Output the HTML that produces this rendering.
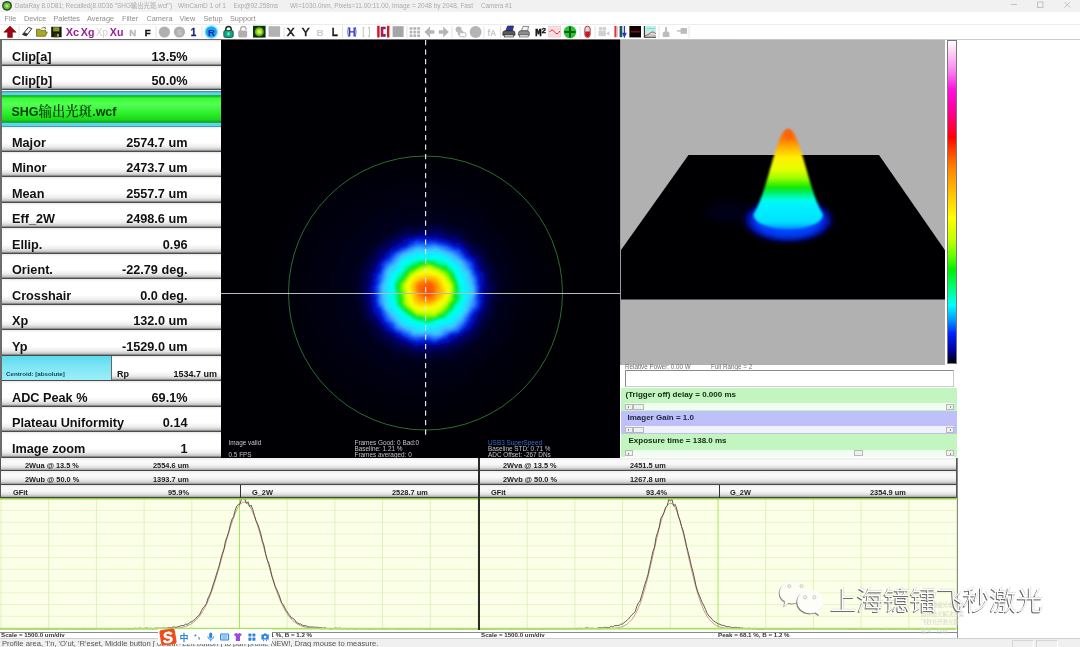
<!DOCTYPE html>
<html lang="zh">
<head>
<meta charset="utf-8">
<title>DataRay</title>
<style>
*{box-sizing:border-box;margin:0;padding:0}
html,body{width:1080px;height:647px;overflow:hidden;background:#fff;font-family:"Liberation Sans","Noto Sans CJK SC",sans-serif;}
#app{position:relative;width:1080px;height:647px;overflow:hidden;background:#fff;filter:blur(0.35px)}
.abs{position:absolute}
/* title */
#title{position:absolute;left:0;top:0;width:1080px;height:12px;background:#f1f1f1;}
#title .t{position:absolute;top:2px;font-size:6.6px;line-height:8px;color:#a9a9a9;white-space:pre}
#menu{position:absolute;left:0;top:12px;width:1080px;height:12px;background:#fff}
#menu span{position:absolute;top:2px;font-size:7.3px;line-height:9px;color:#8d8d8d}
#tb{position:absolute;left:0;top:24px;width:1080px;height:16px;background:#fff;border-top:1px solid #ececec}
#tbline{position:absolute;left:0;top:39px;width:1080px;height:1.4px;background:linear-gradient(90deg,#6a6a6a 0,#6a6a6a 620px,#c2c2c2 620px,#cdcdcd 100%)}
/* left */
#left{position:absolute;left:0;top:40px;width:221px;height:418px;background:#fff}
#left:after{content:"";position:absolute;left:0;top:0;width:1.6px;height:418px;background:#6c6c6c}
.row{position:absolute;left:0;width:221px;background:linear-gradient(#e6e6e6 0%,#fbfbfb 7%,#fff 14%,#fff 62%,#ececec 80%,#c0c0c0 92%,#4a4a4a 97%,#505050 100%);font-weight:bold;font-size:12.7px;color:#111}
.row .l{position:absolute;left:12px;bottom:2px;line-height:14px;white-space:nowrap}
.row .v{position:absolute;right:33.5px;bottom:2px;line-height:14px;white-space:nowrap}
.cen{position:absolute;left:0;top:0;width:112px;height:24.5px;background:linear-gradient(#5ad9ee 0%,#7fe6f5 45%,#9aeef9 100%);border-right:1px solid #666;font-size:6.2px;line-height:6px;padding:15.6px 0 0 6px;color:#0a4a5a;white-space:nowrap;font-weight:bold}
.rp{position:absolute;left:117px;bottom:2.4px;font-size:9px;line-height:10px}
.rpv{position:absolute;right:4px;bottom:2.4px;font-size:9px;line-height:10px}
#file{position:absolute;left:0;top:50.5px;width:221px;height:36.5px;background:linear-gradient(#4a8a95 0%,#55d8ea 6%,#55d8ea 11%,#1a9a20 13%,#30ff30 20%,#55ff55 35%,#30f030 60%,#18d818 80%,#0f9a18 87%,#55d8ea 89%,#55d8ea 96%,#3d7f8c 100%);}
#file span{position:absolute;left:11.5px;top:14.6px;font-size:12.5px;line-height:14px;font-weight:bold;color:#063d06;white-space:nowrap;font-family:"Liberation Sans","Noto Serif CJK SC",serif}
/* centre image */
#img{position:absolute;left:221px;top:40px;width:399px;height:418px;background:#000004;overflow:hidden}
.it{position:absolute;font-size:6.4px;line-height:6px;color:#c4c4c4;white-space:nowrap}
/* 3d */
#v3d{position:absolute;left:620px;top:40px;width:325px;height:324.5px;background:#b1b1b1;overflow:hidden;border-left:1px solid #9a9a9a}
#cbar{position:absolute;left:947px;top:40px;width:9.5px;height:324px;border:0.5px solid #777;
background:linear-gradient(#ffffff 0%,#ffdcf8 2.5%,#fbb0f4 6%,#f878ee 10%,#ff10e0 15%,#ff00b0 20%,#ff0060 25%,#ff0000 30%,#ff4000 34%,#ff8000 39%,#ffb000 45%,#ffe000 51%,#ffff00 55%,#c0ff00 62%,#60ff00 67%,#00f000 71%,#00ff80 77%,#00ffff 82%,#0090ff 87%,#0020ff 91%,#0000a0 96%,#000030 99%,#000 100%)}
/* controls */
.relp{position:absolute;top:364.4px;font-size:6.3px;line-height:6px;color:#6e6e6e;white-space:pre}
#tbox{position:absolute;left:625px;top:370px;width:329px;height:17px;background:#fff;border:1px solid #8a8a8a;border-right-color:#ccc;border-bottom-color:#ccc}
.ctl{position:absolute;left:620.5px;width:336px;font-weight:bold;font-size:8px;color:#152a15}
.ctl span{position:absolute;top:2.4px;line-height:9px;white-space:nowrap}
.trk{position:absolute;left:4.5px;right:2.5px;bottom:0.8px;height:6.8px;background:rgba(255,255,255,.78)}
.btn{position:absolute;top:0.4px;width:8px;height:6px;background:#f0f0f0;border:0.5px solid #b8b8b8;font-size:4px;line-height:5px;text-align:center;color:#222}
.bl:after,.br:after{content:"";position:absolute;top:1.4px;border:1.3px solid transparent}
.bl:after{left:1.6px;border-right-color:#333;border-left-width:0}
.br:after{right:1.6px;border-left-color:#333;border-right-width:0}
/* bottom */
.hrow{position:absolute;height:13.6px;background:linear-gradient(#ececec 0%,#fbfbfb 22%,#f6f6f6 50%,#dcdcdc 76%,#a8a8a8 90%,#3a3a3a 97%,#444 100%);font-weight:bold;font-size:7.4px;color:#1c1c1c;border-left:1px solid #555;border-right:1px solid #555}
.hrow span{position:absolute;top:4.4px;line-height:8px;white-space:nowrap}
.plot{position:absolute}
#scale{position:absolute;left:0;top:630px;width:957px;height:8px;background:#fff}
#scale span{position:absolute;top:2.2px;font-size:6.2px;line-height:6px;font-weight:bold;color:#333;white-space:nowrap}
#status{position:absolute;left:0;top:637.5px;width:1080px;height:9.5px;background:#f0f0f0;border-top:1px solid #cfcfcf}
#status .s{position:absolute;left:2px;top:1px;font-size:7.62px;line-height:8px;color:#555;white-space:nowrap}
#ime{position:absolute;left:158px;top:629px;width:114px;height:14.6px;background:#fff;border-radius:1px}
#wm{position:absolute;left:830px;top:580px;font-size:26.6px;line-height:38px;color:#fff;white-space:nowrap;font-family:"Noto Sans CJK SC","Liberation Sans",sans-serif;font-weight:300;text-shadow:-1px 1px 0.6px #6c6c6c,-0.6px 0.6px 0 #7c7c7c,1px -1px 1px #e0e0e0}
</style>
</head>
<body>
<div id="app">

<!-- ===== title bar ===== -->
<div id="title">
<svg class="abs" style="left:1px;top:0" width="12" height="12" viewBox="0 0 12 12"><circle cx="6" cy="5.8" r="4.9" fill="#2c4a2c"/><circle cx="6" cy="5.8" r="3.4" fill="#69c23a"/><circle cx="6" cy="5.8" r="1.6" fill="#b8e860"/></svg>
<svg class="abs" style="left:0;top:0" width="540" height="12" viewBox="0 0 540 12" font-size="6.6" fill="#ababab" font-family="Liberation Sans, Noto Sans CJK SC, sans-serif">
<text x="15" y="8.2" textLength="157" lengthAdjust="spacingAndGlyphs">DataRay 8.0D81; Recalled(8.0D36 "SHG输出光斑.wcf")</text>
<text x="178" y="8.2" textLength="48" lengthAdjust="spacingAndGlyphs">WinCamD 1 of 1</text>
<text x="233.5" y="8.2" textLength="44.5" lengthAdjust="spacingAndGlyphs">Exp@92.258ms</text>
<text x="290" y="8.2" textLength="183" lengthAdjust="spacingAndGlyphs">WI=1030.0nm, Pixels=11.00:11.00, Image = 2048 by 2048, Fast</text>
<text x="481" y="8.2" textLength="31" lengthAdjust="spacingAndGlyphs">Camera #1</text>
</svg>
<svg class="abs" style="left:1000px;top:0" width="80" height="12" viewBox="0 0 80 12"><g stroke="#b5b5b5" stroke-width="0.8" fill="none"><line x1="11" y1="4.5" x2="17" y2="4.5"/><rect x="37.5" y="2" width="5.5" height="5.5"/><path d="M64.5 2 L70 7.5 M70 2 L64.5 7.5"/></g></svg>
</div>

<!-- ===== menu ===== -->
<div id="menu">
<span style="left:4.5px">File</span><span style="left:24px">Device</span><span style="left:53.5px">Palettes</span><span style="left:87px">Average</span><span style="left:122px">Filter</span><span style="left:146.5px">Camera</span><span style="left:179.5px">View</span><span style="left:203.5px">Setup</span><span style="left:230px">Support</span>
</div>

<!-- ===== toolbar ===== -->
<div id="tb">
<svg class="abs" style="left:0;top:-1px" width="700" height="16" viewBox="0 24 700 16" font-family="Liberation Sans, sans-serif">
<defs><filter id="tbb" x="-5%" y="-20%" width="110%" height="140%"><feGaussianBlur stdDeviation="0.35"/></filter></defs>
<g filter="url(#tbb)">
<!-- separators -->
<g stroke="#dcdcdc" stroke-width="0.8">
<line x1="19" x2="19" y1="26" y2="38"/><line x1="156" x2="156" y1="26" y2="38"/><line x1="202" x2="202" y1="26" y2="38"/>
<line x1="284" x2="284" y1="26" y2="38"/><line x1="342.5" x2="342.5" y1="26" y2="38"/><line x1="407" x2="407" y1="26" y2="38"/>
<line x1="452" x2="452" y1="26" y2="38"/><line x1="484" x2="484" y1="26" y2="38"/><line x1="500.5" x2="500.5" y1="26" y2="38"/>
<line x1="580" x2="580" y1="26" y2="38"/><line x1="595" x2="595" y1="26" y2="38"/><line x1="659" x2="659" y1="26" y2="38"/><line x1="689" x2="689" y1="26" y2="38"/>
</g>
<!-- red up arrow -->
<path d="M10,26 L16.2,32.2 L12.4,32.2 L12.4,37.6 L7.6,37.6 L7.6,32.2 L3.8,32.2 Z" fill="#a4000c" stroke="#5a0008" stroke-width="0.5"/>
<!-- eraser -->
<path d="M22.5,34.5 L28.5,27.3 L31.8,28.6 L26.3,35.9 Z" fill="#fafafa" stroke="#333" stroke-width="1"/>
<path d="M22.5,34.5 L24.3,32.3 L28,33.7 L26.3,35.9 Z" fill="#333"/>
<!-- open folder -->
<path d="M36.5,36.3 L36.5,29.2 L40,29.2 L41,30.4 L45.5,30.4 L45.5,32 L47.3,32 L45.3,36.3 Z" fill="#a8a820" stroke="#5c5c10" stroke-width="0.7"/>
<path d="M41.5,28.6 Q43.5,26.4 45.6,27.8 L45,29.4" fill="none" stroke="#6a6a10" stroke-width="0.9"/>
<!-- save -->
<rect x="51.2" y="26.8" width="10.4" height="10.4" fill="#161a0c"/>
<rect x="53.2" y="27.2" width="6.2" height="4.2" fill="#8a9a28"/>
<rect x="53.6" y="33.4" width="5.6" height="3.8" fill="#2c3410"/>
<rect x="57.2" y="34" width="1.5" height="2.6" fill="#c8d070"/>
<!-- Xc Xg Xp Xu -->
<g font-weight="bold" font-size="11.2" fill="#9a1c9a">
<text x="65.8" y="36.3" textLength="13.4" lengthAdjust="spacingAndGlyphs">Xc</text>
<text x="80.8" y="36.3" textLength="13.6" lengthAdjust="spacingAndGlyphs">Xg</text>
<text x="96" y="36.3" textLength="11.8" lengthAdjust="spacingAndGlyphs" fill="#cfcfcf" font-weight="normal">Xp</text>
<text x="109.8" y="36.3" textLength="13.6" lengthAdjust="spacingAndGlyphs">Xu</text>
</g>
<text x="129.2" y="36" font-size="9.6" font-weight="bold" fill="#b9b9b9" stroke="#b9b9b9" stroke-width="0.3">N</text>
<text x="144.8" y="36" font-size="9.6" font-weight="bold" fill="#151515" stroke="#151515" stroke-width="0.45">F</text>
<!-- grey circles -->
<circle cx="164.4" cy="32" r="5.6" fill="#b0b0b0"/>
<circle cx="179.4" cy="32" r="5.6" fill="#b0b0b0"/>
<text x="176.9" y="35" font-size="7.5" font-weight="bold" fill="#cdcdcd">S</text>
<text x="190.8" y="36" font-size="10" font-weight="bold" fill="#24247c" stroke="#24247c" stroke-width="0.3">1</text>
<!-- R -->
<circle cx="211.3" cy="32" r="7" fill="#9fe6ff"/>
<circle cx="211.3" cy="32" r="5.6" fill="#0aa8f4"/>
<text x="207.9" y="35.6" font-size="9.6" font-weight="bold" fill="#10209c">R</text>
<!-- green lock -->
<path d="M225.8,31 L225.8,29.2 Q225.8,26.4 228.5,26.4 Q231.2,26.4 231.2,29.2 L231.2,31" fill="none" stroke="#1a2a22" stroke-width="1.5"/>
<rect x="223.8" y="30.4" width="9.4" height="7" rx="1.6" fill="#10a684" stroke="#143c30" stroke-width="0.8"/>
<rect x="227.4" y="32.4" width="2.2" height="3" fill="#7fe8d0"/>
<!-- grey lock -->
<path d="M240.6,31 L240.6,29.4 Q240.6,26.6 243.3,26.6 Q246,26.6 246,29.4 L246,29.8" fill="none" stroke="#b4b4b4" stroke-width="1.5"/>
<rect x="238.2" y="30.6" width="9" height="6.8" rx="1.4" fill="#b0b0b0"/>
<!-- green target -->
<rect x="253" y="25.8" width="12.6" height="11.8" fill="#0f3014"/>
<circle cx="259.3" cy="31.7" r="4.5" fill="#58b424"/>
<circle cx="259.3" cy="31.7" r="3" fill="#a8e030"/>
<circle cx="259.3" cy="31.7" r="1.5" fill="#f4f440"/>
<!-- grey square -->
<rect x="268.5" y="26.2" width="11.6" height="10.6" fill="#b2b2b2"/>
<!-- X Y B L -->
<text x="286.8" y="36.1" font-size="11.8" fill="#1c1c1c" stroke="#1c1c1c" stroke-width="0.55">X</text>
<text x="301.8" y="36.1" font-size="11.8" fill="#1c1c1c" stroke="#1c1c1c" stroke-width="0.55">Y</text>
<text x="316.6" y="35.7" font-size="9.8" fill="#cdcdcd" font-weight="bold">B</text>
<text x="331.8" y="35.7" font-size="10" fill="#1a1a1a" font-weight="bold" stroke="#1a1a1a" stroke-width="0.3">L</text>
<!-- (H) blue -->
<g stroke="#3232c8" fill="none" stroke-width="1.4">
<path d="M349.6,27.4 L349.6,36.4 M354.2,27.4 L354.2,36.4 M349.6,31.9 L354.2,31.9"/>
<path d="M348.4,27 Q347.2,31.9 348.4,36.8 M355.4,27 Q356.6,31.9 355.4,36.8" stroke-width="0.8"/>
</g>
<!-- [ ] grey -->
<g stroke="#cacaca" fill="none" stroke-width="1.1"><path d="M364.6,27.6 L363.2,27.6 L363.2,36.4 L364.6,36.4 M368,27.6 L369.4,27.6 L369.4,36.4 L368,36.4"/></g>
<!-- red ICI -->
<g>
<rect x="377.2" y="25.8" width="2.4" height="11.6" fill="#d41420"/>
<rect x="387" y="25.8" width="2.4" height="11.6" fill="#d41420"/>
<path d="M385.6,28 L382,28 L382,35.4 L385.6,35.4" fill="none" stroke="#2a38c8" stroke-width="2.6"/>
<path d="M385.4,28 L382,28 L382,35.4 L385.4,35.4" fill="none" stroke="#d41420" stroke-width="1.7"/>
</g>
<!-- grey square 2 -->
<rect x="392.6" y="26.2" width="11" height="10.8" fill="#a6a6a6"/>
<!-- grid -->
<g fill="#b4b4b4">
<rect x="409.6" y="27.2" width="2.8" height="2.6"/><rect x="413.4" y="27.2" width="2.8" height="2.6"/><rect x="417.2" y="27.2" width="2.8" height="2.6"/>
<rect x="409.6" y="30.8" width="2.8" height="2.6"/><rect x="413.4" y="30.8" width="2.8" height="2.6"/><rect x="417.2" y="30.8" width="2.8" height="2.6"/>
<rect x="409.6" y="34.4" width="2.8" height="2.6"/><rect x="413.4" y="34.4" width="2.8" height="2.6"/><rect x="417.2" y="34.4" width="2.8" height="2.6"/>
</g>
<!-- arrows -->
<path d="M424.4,32 L430,26.6 L430,30.2 L434.4,30.2 L434.4,33.8 L430,33.8 L430,37.4 Z" fill="#b6b6b6"/>
<path d="M448.8,32 L443.2,26.6 L443.2,30.2 L438.8,30.2 L438.8,33.8 L443.2,33.8 L443.2,37.4 Z" fill="#b6b6b6"/>
<!-- grey blob icon -->
<circle cx="458.6" cy="29.4" r="3" fill="#b8b8b8"/><circle cx="460.6" cy="33" r="3" fill="#bdbdbd"/>
<rect x="459.6" y="32.6" width="6.4" height="4.2" rx="1.2" fill="#fafafa" stroke="#b4b4b4" stroke-width="0.9"/>
<circle cx="475.6" cy="32" r="5.9" fill="#b4b4b4"/>
<text x="487.6" y="36" font-size="8.4" fill="#c4c4c4" font-weight="bold" textLength="8.6" lengthAdjust="spacingAndGlyphs">fA</text>
<!-- printer 1 -->
<path d="M505.6,31 L507.6,26 L513.6,26 L512.4,31 Z" fill="#2838a8" stroke="#222" stroke-width="0.6"/>
<path d="M502.8,33.4 Q502.8,30.8 505.2,30.8 L512.6,30.8 Q515,30.8 515,33.4 L515,35.2 L502.8,35.2 Z" fill="#5a5a5a" stroke="#222" stroke-width="0.7"/>
<rect x="504.2" y="34.8" width="9.4" height="2.2" fill="#d8d8d8" stroke="#222" stroke-width="0.6"/>
<!-- printer 2 -->
<path d="M521.2,31 L523,26.4 L528.6,26.4 L527.6,31 Z" fill="#f2f2f2" stroke="#555" stroke-width="0.7"/>
<path d="M518.4,33.4 Q518.4,30.8 520.8,30.8 L527,30.8 Q529.4,30.8 529.4,33.4 L529.4,35.2 L518.4,35.2 Z" fill="#8c8c8c" stroke="#444" stroke-width="0.7"/>
<rect x="519.6" y="34.8" width="8.6" height="2.2" fill="#e0e0e0" stroke="#555" stroke-width="0.6"/>
<!-- M2 -->
<text x="535.2" y="36.2" font-family="Liberation Mono, monospace" font-size="10.6" font-weight="bold" fill="#111" stroke="#111" stroke-width="0.4">M</text>
<text x="541.4" y="33" font-family="Liberation Mono, monospace" font-size="7.8" font-weight="bold" fill="#111" stroke="#111" stroke-width="0.3">2</text>
<!-- pink chart -->
<rect x="548.8" y="26.2" width="11.8" height="10.8" fill="#fbe4e6" stroke="#e0b8bc" stroke-width="0.6"/>
<path d="M549.6,32 Q552,28 554.6,32 T559.8,31" fill="none" stroke="#e03038" stroke-width="1"/>
<path d="M549.6,29 L559.8,29 M549.6,34.6 L559.8,34.6" stroke="#eebcc0" stroke-width="0.5"/>
<!-- green plus -->
<circle cx="570" cy="32" r="6.3" fill="#28c830"/>
<path d="M570,26.4 L570,37.6 M564.4,32 L575.6,32" stroke="#0a5a14" stroke-width="2"/>
<!-- capsule -->
<rect x="584.8" y="26.2" width="5.4" height="11.2" rx="2.7" fill="#d8d8d8" stroke="#b0282c" stroke-width="0.9"/>
<path d="M585.2,31.6 L589.8,31.6 L589.8,34.8 Q589.8,37 587.5,37 Q585.2,37 585.2,34.8 Z" fill="#c8141c"/>
<!-- grey camera -->
<g fill="#d0d0d0"><rect x="598.4" y="30.6" width="7.4" height="5.6"/><path d="M606,33.4 L609.4,31 L609.4,36 Z"/><circle cx="600.6" cy="28.6" r="1.9"/><circle cx="604.4" cy="28.6" r="1.9"/></g>
<!-- red/blue bars -->
<rect x="614.4" y="26" width="2.1" height="11.2" fill="#e03040"/><rect x="616.5" y="26" width="1.2" height="11.2" fill="#f4a8ac"/>
<rect x="619.6" y="26" width="2.7" height="11.2" fill="#155a58"/>
<path d="M624.4,26 L624.4,34 M623,33.4 L624.4,36.6 L625.8,33.4 Z" stroke="#2038c8" stroke-width="1.3" fill="#2038c8"/>
<!-- black square red line -->
<rect x="629.4" y="26" width="11.6" height="11.4" fill="#0a0406"/>
<rect x="630.6" y="30.8" width="9.2" height="1.6" fill="#7c1018"/>
<!-- cyan chart -->
<rect x="644.4" y="26" width="11.6" height="11" fill="#b8f0ec"/>
<path d="M644.4,26 L644.4,37.2 L656,37.2" fill="none" stroke="#3a3020" stroke-width="1.1"/>
<path d="M645,35.8 Q648.4,35 650.6,32.6 Q652.6,30.6 655.8,33.6" fill="none" stroke="#d83830" stroke-width="0.9"/>
<path d="M645,36.6 Q650,33.4 655.8,35.8" fill="none" stroke="#e88070" stroke-width="0.7"/>
<path d="M647,28.6 L655,28.6" stroke="#78c8c0" stroke-width="0.7"/>
<!-- grey joystick -->
<g fill="#bcbcbc"><rect x="665.2" y="27" width="1.8" height="5"/><path d="M662.8,33.6 Q662.8,31.6 664.8,31.6 L667.4,31.6 Q669.4,31.6 669.4,33.6 L669.4,37 L662.8,37 Z"/></g>
<!-- grey plug -->
<g fill="#bcbcbc"><rect x="680.6" y="28" width="6.4" height="5.8"/><rect x="677" y="30.2" width="4" height="1.4"/></g>
</g>
</svg>

</div>
<div id="tbline"></div>

<!-- ===== left panel ===== -->
<div id="left">
<div class="row" style="top:0px;height:25.599999999999994px"><span class="l">Clip[a]</span><span class="v">13.5%</span></div>
<div class="row" style="top:25.599999999999994px;height:24.900000000000006px"><span class="l">Clip[b]</span><span class="v">50.0%</span></div>
<div class="row" style="top:87.0px;height:24.5px"><span class="l">Major</span><span class="v">2574.7 um</span></div>
<div class="row" style="top:111.5px;height:25.5px"><span class="l">Minor</span><span class="v">2473.7 um</span></div>
<div class="row" style="top:137.0px;height:25.5px"><span class="l">Mean</span><span class="v">2557.7 um</span></div>
<div class="row" style="top:162.5px;height:25.5px"><span class="l">Eff_2W</span><span class="v">2498.6 um</span></div>
<div class="row" style="top:188.0px;height:25.5px"><span class="l">Ellip.</span><span class="v">0.96</span></div>
<div class="row" style="top:213.5px;height:25.5px"><span class="l">Orient.</span><span class="v">-22.79 deg.</span></div>
<div class="row" style="top:239.0px;height:25.5px"><span class="l">Crosshair</span><span class="v">0.0 deg.</span></div>
<div class="row" style="top:264.5px;height:25.5px"><span class="l">Xp</span><span class="v">132.0 um</span></div>
<div class="row" style="top:290.0px;height:25.5px"><span class="l">Yp</span><span class="v">-1529.0 um</span></div>
<div class="row" style="top:315.5px;height:25.5px"><div class="cen">Centroid: [absolute]</div><span class="rp">Rp</span><span class="rpv">1534.7 um</span></div>
<div class="row" style="top:341.0px;height:25.5px"><span class="l">ADC Peak %</span><span class="v">69.1%</span></div>
<div class="row" style="top:366.5px;height:25.5px"><span class="l">Plateau Uniformity</span><span class="v">0.14</span></div>
<div class="row" style="top:392.0px;height:25.5px"><span class="l">Image zoom</span><span class="v">1</span></div>
<div id="file"><span>SHG<b style="font-size:13.4px;font-weight:600">输出光斑</b>.wcf</span></div>
</div>

<!-- ===== centre image ===== -->
<div id="img">
<svg class="abs" style="left:0;top:0" width="399" height="418" viewBox="221 40 399 418">
<defs>
<radialGradient id="bg" cx="427.5" cy="291" r="100" gradientUnits="userSpaceOnUse" gradientTransform="translate(0 11.64) scale(1 0.96)">
<stop offset="0.000" stop-color="#ff5200"/>
<stop offset="0.050" stop-color="#ff5c00"/>
<stop offset="0.100" stop-color="#ff8c00"/>
<stop offset="0.145" stop-color="#ffc400"/>
<stop offset="0.190" stop-color="#fbff00"/>
<stop offset="0.230" stop-color="#d0ff00"/>
<stop offset="0.260" stop-color="#70f800"/>
<stop offset="0.285" stop-color="#08e400"/>
<stop offset="0.310" stop-color="#00f070"/>
<stop offset="0.335" stop-color="#00ffd0"/>
<stop offset="0.360" stop-color="#00fcff"/>
<stop offset="0.405" stop-color="#18e4ff"/>
<stop offset="0.445" stop-color="#40c0ff"/>
<stop offset="0.475" stop-color="#2c88ff"/>
<stop offset="0.505" stop-color="#0c40f4"/>
<stop offset="0.540" stop-color="#0210c4"/>
<stop offset="0.590" stop-color="#000074"/>
<stop offset="0.650" stop-color="#000040"/>
<stop offset="0.730" stop-color="#00001e"/>
<stop offset="0.850" stop-color="#00001a" stop-opacity="0.5"/>
<stop offset="1.000" stop-color="#00001a" stop-opacity="0"/>
</radialGradient>
<filter id="bl" x="-10%" y="-10%" width="120%" height="120%"><feGaussianBlur stdDeviation="1.2"/></filter>
<filter id="bn" x="-5%" y="-5%" width="110%" height="110%"><feTurbulence type="fractalNoise" baseFrequency="0.09" numOctaves="2" seed="11" result="n"/><feDisplacementMap in="SourceGraphic" in2="n" scale="5" xChannelSelector="R" yChannelSelector="G" result="d"/><feGaussianBlur in="d" stdDeviation="0.9"/></filter>
</defs>
<radialGradient id="hz" cx="0.5" cy="0.5" r="0.5"><stop offset="0" stop-color="#000024"/><stop offset="0.6" stop-color="#000012"/><stop offset="1" stop-color="#000004"/></radialGradient>
<ellipse cx="415" cy="290" rx="150" ry="145" fill="url(#hz)"/>
<ellipse cx="427.5" cy="291" rx="104" ry="100" fill="url(#bg)" filter="url(#bn)"/>
<ellipse cx="425" cy="288" rx="9" ry="8" fill="#ff4400" opacity="0.3" filter="url(#bl)"/>
<circle cx="425.5" cy="293" r="137" fill="none" stroke="#2c6c30" stroke-width="1"/>
<line x1="221" x2="620" y1="293.5" y2="293.5" stroke="#b9b9b9" stroke-width="1.1"/>
<line x1="425.6" x2="425.6" y1="40" y2="438.5" stroke="#e4e4e4" stroke-width="1.2" stroke-dasharray="5.2 4.3"/>
</svg>
<span class="it" style="left:7.5px;top:399.5px">Image valid</span>
<span class="it" style="left:7.5px;top:411.5px">0.5 FPS</span>
<span class="it" style="left:133.5px;top:399.5px">Frames Good: 0 Bad:0</span>
<span class="it" style="left:133.5px;top:405.5px">Baseline: 1.21 %</span>
<span class="it" style="left:133.5px;top:411.5px">Frames averaged: 0</span>
<span class="it" style="left:267px;top:399.5px;color:#2b74c8">USB3 SuperSpeed</span>
<span class="it" style="left:267px;top:405.5px">Baseline STD:  0.71 %</span>
<span class="it" style="left:267px;top:411.5px">ADC Offset: -267 DNs</span>

</div>

<!-- ===== 3d view ===== -->
<div id="v3d">
<svg class="abs" style="left:-1px;top:0" width="326" height="325" viewBox="620 40 326 325">
<defs>
<linearGradient id="pk" x1="0" y1="129" x2="0" y2="236" gradientUnits="userSpaceOnUse">
<stop offset="0" stop-color="#ff5a00"/>
<stop offset="0.10" stop-color="#ff7c00"/>
<stop offset="0.19" stop-color="#ffbc00"/>
<stop offset="0.27" stop-color="#fff000"/>
<stop offset="0.38" stop-color="#e4ff00"/>
<stop offset="0.46" stop-color="#9cff00"/>
<stop offset="0.545" stop-color="#10e800"/>
<stop offset="0.60" stop-color="#00ee70"/>
<stop offset="0.655" stop-color="#00ffd8"/>
<stop offset="0.70" stop-color="#00f4ff"/>
<stop offset="0.87" stop-color="#00e0ff"/>
<stop offset="0.92" stop-color="#00a0ff"/>
<stop offset="0.96" stop-color="#0050ff"/>
<stop offset="1" stop-color="#0020e0"/>
</linearGradient>
<radialGradient id="glow" cx="0.5" cy="0.5" r="0.5">
<stop offset="0" stop-color="#0058ff"/>
<stop offset="0.68" stop-color="#003cf4"/>
<stop offset="0.80" stop-color="#001ac8"/>
<stop offset="0.91" stop-color="#000674" stop-opacity="0.8"/>
<stop offset="1" stop-color="#000010" stop-opacity="0"/>
</radialGradient>
<filter id="b2" x="-20%" y="-20%" width="140%" height="140%"><feGaussianBlur stdDeviation="0.8"/></filter>
<filter id="b3" x="-30%" y="-30%" width="160%" height="160%"><feGaussianBlur stdDeviation="2.2"/></filter>
<filter id="b4" x="-30%" y="-30%" width="160%" height="160%"><feGaussianBlur stdDeviation="4"/></filter>
</defs>
<polygon points="688.5,155 879,155 945.5,251 945.5,299.5 620,299.5 620,251.5" fill="#000003"/>
<ellipse cx="728" cy="212" rx="24" ry="10" fill="#000040" opacity="0.35" filter="url(#b4)"/>
<ellipse cx="788.3" cy="220" rx="47" ry="23.5" fill="url(#glow)" filter="url(#b3)"/>
<path d="M787.8,129.0 L785.1,130.2 L783.9,131.4 L783.0,132.7 L782.3,133.9 L781.6,135.1 L781.0,136.3 L780.4,137.6 L779.9,138.8 L779.4,140.0 L778.9,141.2 L778.4,142.4 L777.9,143.7 L777.5,144.9 L777.1,146.1 L776.7,147.3 L776.3,148.5 L775.9,149.8 L775.5,151.0 L775.1,152.2 L774.7,153.4 L774.3,154.7 L774.0,155.9 L773.6,157.1 L773.2,158.3 L772.9,159.5 L772.5,160.8 L772.1,162.0 L771.8,163.2 L771.4,164.4 L771.1,165.6 L770.7,166.9 L770.4,168.1 L770.0,169.3 L769.7,170.5 L769.3,171.8 L769.0,173.0 L768.6,174.2 L768.3,175.4 L767.9,176.6 L767.5,177.9 L767.2,179.1 L766.8,180.3 L766.4,181.5 L766.1,182.7 L765.7,184.0 L765.3,185.2 L764.9,186.4 L764.5,187.6 L764.2,188.8 L763.8,190.1 L763.4,191.3 L762.9,192.5 L762.5,193.7 L762.1,195.0 L761.7,196.2 L761.2,197.4 L760.8,198.6 L760.3,199.8 L759.9,201.1 L759.4,202.3 L758.9,203.5 L758.4,204.7 L757.8,205.9 L757.3,207.2 L756.7,208.4 L756.1,209.6 L755.5,210.8 L754.8,212.1 L754.1,213.3 L753.4,214.5 A34.8,15 0 0 0 823.0,214.5 L823.0,214.5 L822.3,213.3 L821.6,212.1 L820.9,210.8 L820.3,209.6 L819.7,208.4 L819.1,207.2 L818.6,205.9 L818.0,204.7 L817.5,203.5 L817.0,202.3 L816.5,201.1 L816.1,199.8 L815.6,198.6 L815.2,197.4 L814.7,196.2 L814.3,195.0 L813.9,193.7 L813.5,192.5 L813.0,191.3 L812.6,190.1 L812.2,188.8 L811.9,187.6 L811.5,186.4 L811.1,185.2 L810.7,184.0 L810.3,182.7 L810.0,181.5 L809.6,180.3 L809.2,179.1 L808.9,177.9 L808.5,176.6 L808.1,175.4 L807.8,174.2 L807.4,173.0 L807.1,171.8 L806.7,170.5 L806.4,169.3 L806.0,168.1 L805.7,166.9 L805.3,165.6 L805.0,164.4 L804.6,163.2 L804.3,162.0 L803.9,160.8 L803.5,159.5 L803.2,158.3 L802.8,157.1 L802.4,155.9 L802.1,154.7 L801.7,153.4 L801.3,152.2 L800.9,151.0 L800.5,149.8 L800.1,148.5 L799.7,147.3 L799.3,146.1 L798.9,144.9 L798.5,143.7 L798.0,142.4 L797.5,141.2 L797.0,140.0 L796.5,138.8 L796.0,137.6 L795.4,136.3 L794.8,135.1 L794.1,133.9 L793.4,132.7 L792.5,131.4 L791.3,130.2 L788.6,129.0Z" fill="url(#pk)" filter="url(#b2)"/>
<path d="M784.5,134 L787.4,128.4 L789,130.8 L790.4,130 L792.4,137 L788,141Z" fill="#ff6410" filter="url(#b2)"/>
</svg>

</div>
<div id="cbar"></div>

<!-- ===== controls ===== -->
<div class="relp" style="left:625px">Relative Power: 0.00 W</div><div class="relp" style="left:711px">Full Range = 2</div>
<div id="tbox"></div>
<div class="ctl" style="top:387.6px;height:23.2px;background:#c3f5c0"><span style="left:5px">(Trigger off) delay = 0.000 ms</span>
 <div class="trk"><div class="btn bl" style="left:0"></div><div class="btn" style="left:8px;width:11px"></div><div class="btn br" style="right:0"></div></div></div>
<div class="ctl" style="top:410.8px;height:23.2px;background:#bfc0fa;color:#1c2340"><span style="left:7px">Imager Gain = 1.0</span>
 <div class="trk"><div class="btn bl" style="left:0"></div><div class="btn" style="left:8px;width:11px"></div><div class="btn br" style="right:0"></div></div></div>
<div class="ctl" style="top:434px;height:23.4px;background:#c3f5c0"><span style="left:8px">Exposure time = 138.0 ms</span>
 <div class="trk"><div class="btn bl" style="left:0"></div><div class="btn" style="left:229px;width:9px"></div><div class="btn br" style="right:0"></div></div></div>

<!-- ===== bottom header rows ===== -->
<div class="hrow" style="left:0;top:457.6px;width:479px"><span style="left:24px">2Wua @ 13.5 %</span><span style="left:152px">2554.6 um</span></div>
<div class="hrow" style="left:0;top:471.2px;width:479px"><span style="left:24px">2Wub @ 50.0 %</span><span style="left:152px">1393.7 um</span></div>
<div class="hrow" style="left:0;top:484.8px;width:479px;height:13.1px"><span style="left:12px">GFit</span><span style="left:167px">95.9%</span><span style="left:251px">G_2W</span><span style="left:391px">2528.7 um</span><i class="abs" style="left:239px;top:0;width:1.3px;height:13.6px;background:#333"></i></div>
<div class="hrow" style="left:479px;top:457.6px;width:478px"><span style="left:23px">2Wva @ 13.5 %</span><span style="left:150px">2451.5 um</span></div>
<div class="hrow" style="left:479px;top:471.2px;width:478px"><span style="left:23px">2Wvb @ 50.0 %</span><span style="left:150px">1267.8 um</span></div>
<div class="hrow" style="left:479px;top:484.8px;width:478px;height:13.1px"><span style="left:11px">GFit</span><span style="left:166px">93.4%</span><span style="left:250px">G_2W</span><span style="left:390px">2354.9 um</span><i class="abs" style="left:238.5px;top:0;width:1.3px;height:13.6px;background:#333"></i></div>

<!-- ===== plots ===== -->
<svg class="plot" style="left:0px;top:498px" width="478.5" height="132.0" viewBox="0 498 478.5 132.0">
<rect x="0" y="498" width="478.5" height="132.0" fill="#fcffe8"/>
<line x1="0" x2="478.5" y1="510.55" y2="510.55" stroke="#e8f6ca" stroke-width="1"/>
<line x1="0" x2="478.5" y1="522.30" y2="522.30" stroke="#e8f6ca" stroke-width="1"/>
<line x1="0" x2="478.5" y1="534.05" y2="534.05" stroke="#e8f6ca" stroke-width="1"/>
<line x1="0" x2="478.5" y1="545.80" y2="545.80" stroke="#e8f6ca" stroke-width="1"/>
<line x1="0" x2="478.5" y1="557.55" y2="557.55" stroke="#e8f6ca" stroke-width="1"/>
<line x1="0" x2="478.5" y1="569.30" y2="569.30" stroke="#e8f6ca" stroke-width="1"/>
<line x1="0" x2="478.5" y1="581.05" y2="581.05" stroke="#e8f6ca" stroke-width="1"/>
<line x1="0" x2="478.5" y1="592.80" y2="592.80" stroke="#e8f6ca" stroke-width="1"/>
<line x1="0" x2="478.5" y1="604.55" y2="604.55" stroke="#e8f6ca" stroke-width="1"/>
<line x1="0" x2="478.5" y1="616.30" y2="616.30" stroke="#e8f6ca" stroke-width="1"/>
<line x1="1.00" x2="1.00" y1="498" y2="628.5" stroke="#dcf2ba" stroke-width="1"/>
<line x1="48.70" x2="48.70" y1="498" y2="628.5" stroke="#dcf2ba" stroke-width="1"/>
<line x1="96.40" x2="96.40" y1="498" y2="628.5" stroke="#dcf2ba" stroke-width="1"/>
<line x1="144.10" x2="144.10" y1="498" y2="628.5" stroke="#dcf2ba" stroke-width="1"/>
<line x1="191.80" x2="191.80" y1="498" y2="628.5" stroke="#dcf2ba" stroke-width="1"/>
<line x1="239.50" x2="239.50" y1="498" y2="628.5" stroke="#a4ea58" stroke-width="1"/>
<line x1="287.20" x2="287.20" y1="498" y2="628.5" stroke="#dcf2ba" stroke-width="1"/>
<line x1="334.90" x2="334.90" y1="498" y2="628.5" stroke="#dcf2ba" stroke-width="1"/>
<line x1="382.60" x2="382.60" y1="498" y2="628.5" stroke="#dcf2ba" stroke-width="1"/>
<line x1="430.30" x2="430.30" y1="498" y2="628.5" stroke="#dcf2ba" stroke-width="1"/>
<line x1="478.00" x2="478.00" y1="498" y2="628.5" stroke="#dcf2ba" stroke-width="1"/>
<polyline fill="none" stroke="#b4705c" stroke-width="0.7" points="0.0,628.8 1.6,628.8 3.2,628.8 4.8,628.8 6.4,628.8 8.0,628.8 9.6,628.8 11.2,628.8 12.8,628.8 14.4,628.8 16.0,628.8 17.6,628.8 19.2,628.8 20.8,628.8 22.4,628.8 24.0,628.8 25.6,628.8 27.2,628.8 28.8,628.8 30.4,628.8 32.0,628.8 33.6,628.8 35.2,628.8 36.8,628.8 38.4,628.8 40.0,628.8 41.6,628.8 43.2,628.8 44.8,628.8 46.4,628.8 48.0,628.8 49.6,628.8 51.2,628.8 52.8,628.8 54.4,628.8 56.0,628.8 57.6,628.8 59.2,628.8 60.8,628.8 62.4,628.8 64.0,628.8 65.6,628.8 67.2,628.8 68.8,628.8 70.4,628.8 72.0,628.8 73.6,628.8 75.2,628.8 76.8,628.8 78.4,628.8 80.0,628.8 81.6,628.8 83.2,628.8 84.8,628.8 86.4,628.8 88.0,628.8 89.6,628.8 91.2,628.8 92.8,628.8 94.4,628.8 96.0,628.8 97.6,628.8 99.2,628.8 100.8,628.8 102.4,628.8 104.0,628.8 105.6,628.8 107.2,628.8 108.8,628.8 110.4,628.8 112.0,628.8 113.6,628.8 115.2,628.8 116.8,628.8 118.4,628.8 120.0,628.8 121.6,628.8 123.2,628.8 124.8,628.8 126.4,628.8 128.0,628.8 129.6,628.8 131.2,628.8 132.8,628.8 134.4,628.8 136.0,628.8 137.6,628.8 139.2,628.8 140.8,628.8 142.4,628.8 144.0,628.8 145.6,628.8 147.2,628.8 148.8,628.8 150.4,628.8 152.0,628.8 153.6,628.8 155.2,628.8 156.8,628.8 158.4,628.8 160.0,628.8 161.6,628.8 163.2,628.7 164.8,628.7 166.4,628.7 168.0,628.6 169.6,628.6 171.2,628.5 172.8,628.4 174.4,628.3 176.0,628.2 177.6,628.0 179.2,627.8 180.8,627.6 182.4,627.3 184.0,626.9 185.6,626.4 187.2,625.8 188.8,625.1 190.4,624.3 192.0,623.4 193.6,622.2 195.2,620.9 196.8,619.4 198.4,617.6 200.0,615.5 201.6,613.2 203.2,610.6 204.8,607.7 206.4,604.5 208.0,600.9 209.6,597.0 211.2,592.8 212.8,588.2 214.4,583.4 216.0,578.2 217.6,572.8 219.2,567.2 220.8,561.5 222.4,555.6 224.0,549.7 225.6,543.8 227.2,538.0 228.8,532.4 230.4,527.1 232.0,522.1 233.6,517.5 235.2,513.4 236.8,509.8 238.4,506.9 240.0,504.6 241.6,503.0 243.2,502.2 244.8,502.1 246.4,502.7 248.0,504.1 249.6,506.2 251.2,509.0 252.8,512.4 254.4,516.4 256.0,520.9 257.6,525.8 259.2,531.1 260.8,536.6 262.4,542.4 264.0,548.2 265.6,554.1 267.2,560.0 268.8,565.8 270.4,571.5 272.0,576.9 273.6,582.1 275.2,587.0 276.8,591.7 278.4,596.0 280.0,600.0 281.6,603.6 283.2,606.9 284.8,609.9 286.4,612.6 288.0,615.0 289.6,617.1 291.2,618.9 292.8,620.5 294.4,621.9 296.0,623.1 297.6,624.1 299.2,625.0 300.8,625.7 302.4,626.3 304.0,626.8 305.6,627.2 307.2,627.5 308.8,627.8 310.4,628.0 312.0,628.2 313.6,628.3 315.2,628.4 316.8,628.5 318.4,628.6 320.0,628.6 321.6,628.7 323.2,628.7 324.8,628.7 326.4,628.7 328.0,628.8 329.6,628.8 331.2,628.8 332.8,628.8 334.4,628.8 336.0,628.8 337.6,628.8 339.2,628.8 340.8,628.8 342.4,628.8 344.0,628.8 345.6,628.8 347.2,628.8 348.8,628.8 350.4,628.8 352.0,628.8 353.6,628.8 355.2,628.8 356.8,628.8 358.4,628.8 360.0,628.8 361.6,628.8 363.2,628.8 364.8,628.8 366.4,628.8 368.0,628.8 369.6,628.8 371.2,628.8 372.8,628.8 374.4,628.8 376.0,628.8 377.6,628.8 379.2,628.8 380.8,628.8 382.4,628.8 384.0,628.8 385.6,628.8 387.2,628.8 388.8,628.8 390.4,628.8 392.0,628.8 393.6,628.8 395.2,628.8 396.8,628.8 398.4,628.8 400.0,628.8 401.6,628.8 403.2,628.8 404.8,628.8 406.4,628.8 408.0,628.8 409.6,628.8 411.2,628.8 412.8,628.8 414.4,628.8 416.0,628.8 417.6,628.8 419.2,628.8 420.8,628.8 422.4,628.8 424.0,628.8 425.6,628.8 427.2,628.8 428.8,628.8 430.4,628.8 432.0,628.8 433.6,628.8 435.2,628.8 436.8,628.8 438.4,628.8 440.0,628.8 441.6,628.8 443.2,628.8 444.8,628.8 446.4,628.8 448.0,628.8 449.6,628.8 451.2,628.8 452.8,628.8 454.4,628.8 456.0,628.8 457.6,628.8 459.2,628.8 460.8,628.8 462.4,628.8 464.0,628.8 465.6,628.8 467.2,628.8 468.8,628.8 470.4,628.8 472.0,628.8 473.6,628.8 475.2,628.8 476.8,628.8 478.4,628.8"/>
<polyline fill="none" stroke="#3a3230" stroke-width="0.8" points="0.0,628.6 1.6,628.7 3.2,628.7 4.8,628.7 6.4,628.7 8.0,628.6 9.6,628.6 11.2,628.8 12.8,628.6 14.4,628.6 16.0,628.8 17.6,628.7 19.2,628.8 20.8,628.7 22.4,628.7 24.0,628.6 25.6,628.7 27.2,628.8 28.8,628.7 30.4,628.8 32.0,628.7 33.6,628.6 35.2,628.8 36.8,628.7 38.4,628.7 40.0,628.6 41.6,628.8 43.2,628.7 44.8,628.8 46.4,628.8 48.0,628.8 49.6,628.8 51.2,628.7 52.8,628.8 54.4,628.7 56.0,628.8 57.6,628.8 59.2,628.6 60.8,628.6 62.4,628.6 64.0,628.8 65.6,628.7 67.2,628.7 68.8,628.7 70.4,628.7 72.0,628.7 73.6,628.7 75.2,628.7 76.8,628.7 78.4,628.8 80.0,628.7 81.6,628.8 83.2,628.8 84.8,628.8 86.4,628.7 88.0,628.6 89.6,628.8 91.2,628.8 92.8,628.8 94.4,628.7 96.0,628.7 97.6,628.6 99.2,628.8 100.8,628.7 102.4,628.6 104.0,628.6 105.6,628.8 107.2,628.8 108.8,628.6 110.4,628.8 112.0,628.7 113.6,628.6 115.2,628.6 116.8,628.7 118.4,628.8 120.0,628.6 121.6,628.7 123.2,628.6 124.8,628.7 126.4,628.6 128.0,628.7 129.6,628.8 131.2,628.6 132.8,628.9 134.4,628.4 136.0,628.2 137.6,628.7 139.2,628.1 140.8,628.3 142.4,628.5 144.0,628.6 145.6,628.2 147.2,628.0 148.8,628.8 150.4,628.2 152.0,628.8 153.6,628.7 155.2,628.2 156.8,628.2 158.4,628.2 160.0,628.3 161.6,628.2 163.2,628.1 164.8,628.1 166.4,628.3 168.0,627.8 169.6,627.6 171.2,627.8 172.8,627.1 174.4,627.0 176.0,627.5 177.6,626.8 179.2,626.5 180.8,625.6 182.4,625.7 184.0,625.4 185.6,624.2 187.2,624.3 188.8,623.6 190.4,621.9 192.0,621.7 193.6,620.3 195.2,619.3 196.8,617.1 198.4,616.0 200.0,614.0 201.6,610.3 203.2,607.7 204.8,606.2 206.4,603.7 208.0,598.3 209.6,595.0 211.2,591.2 212.8,585.8 214.4,581.1 216.0,575.8 217.6,570.6 219.2,565.8 220.8,559.0 222.4,553.4 224.0,548.9 225.6,540.5 227.2,536.5 228.8,531.4 230.4,524.5 232.0,519.1 233.6,516.9 235.2,510.1 236.8,506.0 238.4,504.5 240.0,504.0 241.6,498.3 243.2,498.7 244.8,498.7 246.4,503.4 248.0,501.7 249.6,506.7 251.2,505.1 252.8,509.7 254.4,515.3 256.0,520.7 257.6,523.9 259.2,528.4 260.8,533.7 262.4,540.8 264.0,545.6 265.6,553.6 267.2,559.6 268.8,563.2 270.4,569.1 272.0,576.3 273.6,581.0 275.2,586.4 276.8,589.6 278.4,593.3 280.0,597.7 281.6,602.6 283.2,604.6 284.8,607.8 286.4,610.7 288.0,613.1 289.6,615.2 291.2,617.9 292.8,618.2 294.4,619.4 296.0,622.0 297.6,623.0 299.2,624.0 300.8,624.0 302.4,625.3 304.0,625.8 305.6,625.5 307.2,626.5 308.8,626.9 310.4,627.0 312.0,627.1 313.6,627.0 315.2,627.3 316.8,627.3 318.4,627.3 320.0,627.9 321.6,627.7 323.2,628.3 324.8,627.6 326.4,628.5 328.0,628.4 329.6,628.7 331.2,628.7 332.8,628.7 334.4,628.5 336.0,627.9 337.6,628.7 339.2,628.2 340.8,628.3 342.4,628.7 344.0,628.6 345.6,628.5 347.2,628.9 348.8,628.7 350.4,628.5 352.0,628.4 353.6,628.9 355.2,628.6 356.8,628.9 358.4,628.5 360.0,628.6 361.6,628.7 363.2,628.7 364.8,628.6 366.4,628.7 368.0,628.8 369.6,628.8 371.2,628.8 372.8,628.6 374.4,628.7 376.0,628.8 377.6,628.6 379.2,628.6 380.8,628.6 382.4,628.7 384.0,628.7 385.6,628.7 387.2,628.8 388.8,628.6 390.4,628.6 392.0,628.6 393.6,628.6 395.2,628.6 396.8,628.8 398.4,628.8 400.0,628.6 401.6,628.7 403.2,628.7 404.8,628.7 406.4,628.7 408.0,628.7 409.6,628.7 411.2,628.7 412.8,628.6 414.4,628.7 416.0,628.6 417.6,628.7 419.2,628.8 420.8,628.7 422.4,628.6 424.0,628.6 425.6,628.7 427.2,628.7 428.8,628.8 430.4,628.7 432.0,628.8 433.6,628.7 435.2,628.7 436.8,628.7 438.4,628.7 440.0,628.7 441.6,628.7 443.2,628.7 444.8,628.7 446.4,628.6 448.0,628.7 449.6,628.7 451.2,628.6 452.8,628.7 454.4,628.7 456.0,628.8 457.6,628.8 459.2,628.7 460.8,628.8 462.4,628.8 464.0,628.6 465.6,628.7 467.2,628.6 468.8,628.8 470.4,628.7 472.0,628.8 473.6,628.8 475.2,628.7 476.8,628.8 478.4,628.7"/>
<line x1="0" x2="478.5" y1="498.7" y2="498.7" stroke="#8fd048" stroke-width="1.7"/>
<line x1="0" x2="478.5" y1="628.6" y2="628.6" stroke="#a6e460" stroke-width="1.9"/>
</svg>
<svg class="plot" style="left:480px;top:498px" width="476.5" height="132.0" viewBox="480 498 476.5 132.0">
<rect x="480" y="498" width="476.5" height="132.0" fill="#fcffe8"/>
<line x1="480" x2="956.5" y1="510.55" y2="510.55" stroke="#e8f6ca" stroke-width="1"/>
<line x1="480" x2="956.5" y1="522.30" y2="522.30" stroke="#e8f6ca" stroke-width="1"/>
<line x1="480" x2="956.5" y1="534.05" y2="534.05" stroke="#e8f6ca" stroke-width="1"/>
<line x1="480" x2="956.5" y1="545.80" y2="545.80" stroke="#e8f6ca" stroke-width="1"/>
<line x1="480" x2="956.5" y1="557.55" y2="557.55" stroke="#e8f6ca" stroke-width="1"/>
<line x1="480" x2="956.5" y1="569.30" y2="569.30" stroke="#e8f6ca" stroke-width="1"/>
<line x1="480" x2="956.5" y1="581.05" y2="581.05" stroke="#e8f6ca" stroke-width="1"/>
<line x1="480" x2="956.5" y1="592.80" y2="592.80" stroke="#e8f6ca" stroke-width="1"/>
<line x1="480" x2="956.5" y1="604.55" y2="604.55" stroke="#e8f6ca" stroke-width="1"/>
<line x1="480" x2="956.5" y1="616.30" y2="616.30" stroke="#e8f6ca" stroke-width="1"/>
<line x1="527.20" x2="527.20" y1="498" y2="628.5" stroke="#dcf2ba" stroke-width="1"/>
<line x1="574.90" x2="574.90" y1="498" y2="628.5" stroke="#dcf2ba" stroke-width="1"/>
<line x1="622.60" x2="622.60" y1="498" y2="628.5" stroke="#dcf2ba" stroke-width="1"/>
<line x1="670.30" x2="670.30" y1="498" y2="628.5" stroke="#dcf2ba" stroke-width="1"/>
<line x1="718.00" x2="718.00" y1="498" y2="628.5" stroke="#a4ea58" stroke-width="1"/>
<line x1="765.70" x2="765.70" y1="498" y2="628.5" stroke="#dcf2ba" stroke-width="1"/>
<line x1="813.40" x2="813.40" y1="498" y2="628.5" stroke="#dcf2ba" stroke-width="1"/>
<line x1="861.10" x2="861.10" y1="498" y2="628.5" stroke="#dcf2ba" stroke-width="1"/>
<line x1="908.80" x2="908.80" y1="498" y2="628.5" stroke="#dcf2ba" stroke-width="1"/>
<line x1="956.50" x2="956.50" y1="498" y2="628.5" stroke="#dcf2ba" stroke-width="1"/>
<polyline fill="none" stroke="#b4705c" stroke-width="0.7" points="480.0,628.8 481.6,628.8 483.2,628.8 484.8,628.8 486.4,628.8 488.0,628.8 489.6,628.8 491.2,628.8 492.8,628.8 494.4,628.8 496.0,628.8 497.6,628.8 499.2,628.8 500.8,628.8 502.4,628.8 504.0,628.8 505.6,628.8 507.2,628.8 508.8,628.8 510.4,628.8 512.0,628.8 513.6,628.8 515.2,628.8 516.8,628.8 518.4,628.8 520.0,628.8 521.6,628.8 523.2,628.8 524.8,628.8 526.4,628.8 528.0,628.8 529.6,628.8 531.2,628.8 532.8,628.8 534.4,628.8 536.0,628.8 537.6,628.8 539.2,628.8 540.8,628.8 542.4,628.8 544.0,628.8 545.6,628.8 547.2,628.8 548.8,628.8 550.4,628.8 552.0,628.8 553.6,628.8 555.2,628.8 556.8,628.8 558.4,628.8 560.0,628.8 561.6,628.8 563.2,628.8 564.8,628.8 566.4,628.8 568.0,628.8 569.6,628.8 571.2,628.8 572.8,628.8 574.4,628.8 576.0,628.8 577.6,628.8 579.2,628.8 580.8,628.8 582.4,628.8 584.0,628.8 585.6,628.8 587.2,628.8 588.8,628.8 590.4,628.8 592.0,628.8 593.6,628.8 595.2,628.8 596.8,628.8 598.4,628.8 600.0,628.8 601.6,628.8 603.2,628.8 604.8,628.7 606.4,628.7 608.0,628.7 609.6,628.6 611.2,628.5 612.8,628.4 614.4,628.3 616.0,628.1 617.6,627.8 619.2,627.5 620.8,627.1 622.4,626.5 624.0,625.9 625.6,625.0 627.2,624.0 628.8,622.7 630.4,621.1 632.0,619.3 633.6,617.0 635.2,614.4 636.8,611.4 638.4,607.9 640.0,603.9 641.6,599.5 643.2,594.5 644.8,589.1 646.4,583.2 648.0,576.9 649.6,570.2 651.2,563.3 652.8,556.2 654.4,549.0 656.0,541.9 657.6,535.1 659.2,528.5 660.8,522.4 662.4,517.0 664.0,512.3 665.6,508.5 667.2,505.7 668.8,503.9 670.4,503.2 672.0,503.6 673.6,505.2 675.2,507.7 676.8,511.3 678.4,515.8 680.0,521.0 681.6,526.9 683.2,533.4 684.8,540.2 686.4,547.3 688.0,554.4 689.6,561.5 691.2,568.5 692.8,575.3 694.4,581.7 696.0,587.7 697.6,593.2 699.2,598.3 700.8,602.9 702.4,607.0 704.0,610.6 705.6,613.7 707.2,616.4 708.8,618.7 710.4,620.7 712.0,622.3 713.6,623.7 715.2,624.8 716.8,625.7 718.4,626.4 720.0,627.0 721.6,627.4 723.2,627.8 724.8,628.0 726.4,628.2 728.0,628.4 729.6,628.5 731.2,628.6 732.8,628.6 734.4,628.7 736.0,628.7 737.6,628.7 739.2,628.8 740.8,628.8 742.4,628.8 744.0,628.8 745.6,628.8 747.2,628.8 748.8,628.8 750.4,628.8 752.0,628.8 753.6,628.8 755.2,628.8 756.8,628.8 758.4,628.8 760.0,628.8 761.6,628.8 763.2,628.8 764.8,628.8 766.4,628.8 768.0,628.8 769.6,628.8 771.2,628.8 772.8,628.8 774.4,628.8 776.0,628.8 777.6,628.8 779.2,628.8 780.8,628.8 782.4,628.8 784.0,628.8 785.6,628.8 787.2,628.8 788.8,628.8 790.4,628.8 792.0,628.8 793.6,628.8 795.2,628.8 796.8,628.8 798.4,628.8 800.0,628.8 801.6,628.8 803.2,628.8 804.8,628.8 806.4,628.8 808.0,628.8 809.6,628.8 811.2,628.8 812.8,628.8 814.4,628.8 816.0,628.8 817.6,628.8 819.2,628.8 820.8,628.8 822.4,628.8 824.0,628.8 825.6,628.8 827.2,628.8 828.8,628.8 830.4,628.8 832.0,628.8 833.6,628.8 835.2,628.8 836.8,628.8 838.4,628.8 840.0,628.8 841.6,628.8 843.2,628.8 844.8,628.8 846.4,628.8 848.0,628.8 849.6,628.8 851.2,628.8 852.8,628.8 854.4,628.8 856.0,628.8 857.6,628.8 859.2,628.8 860.8,628.8 862.4,628.8 864.0,628.8 865.6,628.8 867.2,628.8 868.8,628.8 870.4,628.8 872.0,628.8 873.6,628.8 875.2,628.8 876.8,628.8 878.4,628.8 880.0,628.8 881.6,628.8 883.2,628.8 884.8,628.8 886.4,628.8 888.0,628.8 889.6,628.8 891.2,628.8 892.8,628.8 894.4,628.8 896.0,628.8 897.6,628.8 899.2,628.8 900.8,628.8 902.4,628.8 904.0,628.8 905.6,628.8 907.2,628.8 908.8,628.8 910.4,628.8 912.0,628.8 913.6,628.8 915.2,628.8 916.8,628.8 918.4,628.8 920.0,628.8 921.6,628.8 923.2,628.8 924.8,628.8 926.4,628.8 928.0,628.8 929.6,628.8 931.2,628.8 932.8,628.8 934.4,628.8 936.0,628.8 937.6,628.8 939.2,628.8 940.8,628.8 942.4,628.8 944.0,628.8 945.6,628.8 947.2,628.8 948.8,628.8 950.4,628.8 952.0,628.8 953.6,628.8 955.2,628.8"/>
<polyline fill="none" stroke="#3a3230" stroke-width="0.8" points="480.0,628.7 481.6,628.8 483.2,628.8 484.8,628.8 486.4,628.8 488.0,628.8 489.6,628.6 491.2,628.7 492.8,628.8 494.4,628.7 496.0,628.8 497.6,628.6 499.2,628.7 500.8,628.6 502.4,628.7 504.0,628.7 505.6,628.6 507.2,628.6 508.8,628.6 510.4,628.8 512.0,628.8 513.6,628.6 515.2,628.8 516.8,628.6 518.4,628.7 520.0,628.6 521.6,628.6 523.2,628.8 524.8,628.6 526.4,628.6 528.0,628.8 529.6,628.8 531.2,628.6 532.8,628.8 534.4,628.7 536.0,628.7 537.6,628.6 539.2,628.8 540.8,628.7 542.4,628.8 544.0,628.8 545.6,628.6 547.2,628.7 548.8,628.6 550.4,628.6 552.0,628.6 553.6,628.6 555.2,628.7 556.8,628.6 558.4,628.7 560.0,628.6 561.6,628.6 563.2,628.8 564.8,628.7 566.4,628.6 568.0,628.7 569.6,628.7 571.2,628.5 572.8,628.7 574.4,628.5 576.0,628.7 577.6,628.9 579.2,628.1 580.8,628.8 582.4,628.4 584.0,628.6 585.6,628.0 587.2,628.0 588.8,628.1 590.4,628.8 592.0,628.0 593.6,628.5 595.2,628.6 596.8,628.5 598.4,627.8 600.0,627.7 601.6,627.8 603.2,627.9 604.8,627.1 606.4,627.6 608.0,627.5 609.6,627.4 611.2,626.2 612.8,627.0 614.4,625.7 616.0,625.6 617.6,625.5 619.2,625.4 620.8,624.1 622.4,624.1 624.0,622.7 625.6,621.4 627.2,620.2 628.8,618.5 630.4,616.6 632.0,614.7 633.6,613.4 635.2,611.5 636.8,606.6 638.4,602.7 640.0,601.2 641.6,595.6 643.2,590.3 644.8,584.4 646.4,579.8 648.0,574.4 649.6,566.6 651.2,559.7 652.8,551.6 654.4,547.5 656.0,537.5 657.6,532.4 659.2,527.2 660.8,518.5 662.4,515.8 664.0,512.7 665.6,507.3 667.2,505.7 668.8,499.5 670.4,500.7 672.0,499.5 673.6,505.8 675.2,504.4 676.8,509.0 678.4,516.2 680.0,520.4 681.6,526.5 683.2,530.9 684.8,537.7 686.4,545.4 688.0,551.6 689.6,558.0 691.2,565.2 692.8,571.0 694.4,578.0 696.0,585.8 697.6,591.1 699.2,595.1 700.8,599.3 702.4,602.9 704.0,606.0 705.6,609.6 707.2,613.4 708.8,615.9 710.4,617.1 712.0,619.5 713.6,620.9 715.2,622.0 716.8,623.0 718.4,624.0 720.0,624.2 721.6,625.3 723.2,625.3 724.8,625.9 726.4,626.6 728.0,626.8 729.6,626.7 731.2,627.6 732.8,627.5 734.4,627.6 736.0,627.1 737.6,627.8 739.2,627.6 740.8,628.1 742.4,628.0 744.0,628.5 745.6,628.4 747.2,628.6 748.8,628.2 750.4,628.5 752.0,628.6 753.6,628.8 755.2,628.3 756.8,628.8 758.4,628.9 760.0,628.7 761.6,628.9 763.2,628.9 764.8,628.6 766.4,628.6 768.0,628.6 769.6,628.7 771.2,628.8 772.8,628.7 774.4,628.7 776.0,628.7 777.6,628.7 779.2,628.6 780.8,628.8 782.4,628.7 784.0,628.7 785.6,628.7 787.2,628.7 788.8,628.8 790.4,628.7 792.0,628.7 793.6,628.6 795.2,628.6 796.8,628.7 798.4,628.7 800.0,628.6 801.6,628.7 803.2,628.7 804.8,628.6 806.4,628.7 808.0,628.6 809.6,628.6 811.2,628.6 812.8,628.7 814.4,628.6 816.0,628.6 817.6,628.6 819.2,628.7 820.8,628.7 822.4,628.7 824.0,628.7 825.6,628.6 827.2,628.8 828.8,628.6 830.4,628.7 832.0,628.6 833.6,628.7 835.2,628.6 836.8,628.8 838.4,628.7 840.0,628.6 841.6,628.7 843.2,628.6 844.8,628.7 846.4,628.7 848.0,628.7 849.6,628.8 851.2,628.8 852.8,628.7 854.4,628.8 856.0,628.7 857.6,628.7 859.2,628.6 860.8,628.7 862.4,628.7 864.0,628.8 865.6,628.8 867.2,628.7 868.8,628.7 870.4,628.8 872.0,628.6 873.6,628.6 875.2,628.7 876.8,628.7 878.4,628.6 880.0,628.7 881.6,628.8 883.2,628.7 884.8,628.7 886.4,628.6 888.0,628.6 889.6,628.8 891.2,628.7 892.8,628.8 894.4,628.8 896.0,628.7 897.6,628.6 899.2,628.8 900.8,628.7 902.4,628.7 904.0,628.7 905.6,628.8 907.2,628.7 908.8,628.6 910.4,628.7 912.0,628.6 913.6,628.7 915.2,628.7 916.8,628.7 918.4,628.8 920.0,628.8 921.6,628.6 923.2,628.7 924.8,628.6 926.4,628.8 928.0,628.8 929.6,628.6 931.2,628.6 932.8,628.6 934.4,628.8 936.0,628.7 937.6,628.7 939.2,628.7 940.8,628.7 942.4,628.7 944.0,628.8 945.6,628.6 947.2,628.8 948.8,628.7 950.4,628.7 952.0,628.7 953.6,628.7 955.2,628.7"/>
<line x1="480" x2="956.5" y1="498.7" y2="498.7" stroke="#8fd048" stroke-width="1.7"/>
<line x1="480" x2="956.5" y1="628.6" y2="628.6" stroke="#a6e460" stroke-width="1.9"/>
</svg>
<div class="abs" style="left:478.3px;top:458px;width:1.7px;height:180px;background:#2a2a2a"></div>
<div class="abs" style="left:956.5px;top:458px;width:1px;height:180px;background:#8a8a8a"></div>

<div id="scale"><i class="abs" style="left:0;top:1.5px;width:957px;height:1px;background:#8c8c8c"></i>
<span style="left:1px">Scale = 1500.0 um/div</span><span style="left:240.5px">Peak = 69.1 %, B = 1.2 %</span>
<span style="left:481px">Scale = 1500.0 um/div</span><span style="left:718px">Peak = 68.1 %, B = 1.2 %</span></div>

<div id="status"><span class="s">Profile area, 'I'n, 'O'ut, 'R'eset, Middle button [ or Ctrl+Left button ] to pan profile NEW!, Drag mouse to measure.</span>
<i class="abs" style="left:1012px;top:1px;width:22px;height:8px;border:1px solid #d5d5d5;border-right-color:#fff;border-bottom-color:#fff"></i>
<i class="abs" style="left:1036px;top:1px;width:22px;height:8px;border:1px solid #d5d5d5;border-right-color:#fff;border-bottom-color:#fff"></i></div>

<!-- ===== IME bar ===== -->
<div id="ime">
<svg class="abs" style="left:0;top:-2px" width="116" height="19" viewBox="158 627 116 19" font-family="Liberation Sans, Noto Sans CJK SC, sans-serif">
<defs><filter id="imb" x="-10%" y="-10%" width="120%" height="120%"><feGaussianBlur stdDeviation="0.35"/></filter></defs>
<g filter="url(#imb)">
<g transform="rotate(-9 168 637)">
<rect x="160.2" y="629.2" width="15.6" height="15.6" rx="2.6" fill="#ee4e1e"/>
<text x="162.6" y="642.8" font-size="15.4" font-weight="bold" font-style="italic" fill="#fff" stroke="#fff" stroke-width="0.5">S</text>
</g>
<text x="179.6" y="640.8" font-size="9" font-weight="bold" fill="#2a86e2">中</text>
<circle cx="195.4" cy="635.4" r="1" fill="#2a86e2"/><path d="M198.4,637.4 q1.4,0.4 0.6,2.2" stroke="#2a86e2" stroke-width="1.1" fill="none"/>
<rect x="209.2" y="632.6" width="3" height="5.6" rx="1.5" fill="#2a86e2"/><path d="M207.8,636.4 q0,3 2.9,3 q2.9,0 2.9,-3 M210.7,639.4 L210.7,641.4" stroke="#2a86e2" stroke-width="0.9" fill="none"/>
<rect x="220.6" y="634" width="8" height="6" rx="0.8" fill="#cfe6fb" stroke="#2a86e2" stroke-width="1.1"/><path d="M222.2,636 L227,636 M222.2,638 L227,638" stroke="#2a86e2" stroke-width="0.7"/>
<path d="M234,634 L236.4,633 Q237.9,634.4 239.4,633 L241.8,634 L240.8,636.2 L240,635.8 L240,641 L235.8,641 L235.8,635.8 L235,636.2 Z" fill="#9a4ce0"/>
<g fill="#2a86e2"><rect x="248.4" y="633.4" width="3" height="3.2" rx="0.6"/><rect x="252.4" y="633.4" width="3" height="3.2" rx="0.6"/><rect x="248.4" y="637.6" width="3" height="3.2" rx="0.6"/><rect x="252.4" y="637.6" width="3" height="3.2" rx="0.6"/></g>
<path d="M265.1,633 L267,634.4 L268.8,634.4 L268.8,639.6 L261.4,639.6 L261.4,634.4 L263.2,634.4 Z" fill="#2a86e2"/><circle cx="265.1" cy="637" r="1.3" fill="#fff"/><path d="M263.6,639.6 L263.6,641.2 M266.6,639.6 L266.6,641.2" stroke="#2a86e2" stroke-width="1"/>
</g>
</svg>

</div>

<!-- ===== watermark ===== -->
<svg class="abs" style="left:776px;top:578px" width="54" height="44" viewBox="776 578 54 44">
<defs><filter id="wms" x="-20%" y="-20%" width="140%" height="140%"><feGaussianBlur stdDeviation="0.5"/></filter></defs>
<g filter="url(#wms)">
<path d="M792,581.6 C799,581.6 804.4,586.4 804.4,592.6 C804.4,598.8 799,603.6 792,603.6 C790.6,603.6 789.4,603.4 788.2,603.1 L784.2,606.6 L785,601.6 C781.6,599.6 779.6,596.4 779.6,592.6 C779.6,586.4 785,581.6 792,581.6 Z" fill="#8c8c8c" transform="translate(-0.9 0.9)"/>
<path d="M792,581.6 C799,581.6 804.4,586.4 804.4,592.6 C804.4,598.8 799,603.6 792,603.6 C790.6,603.6 789.4,603.4 788.2,603.1 L784.2,606.6 L785,601.6 C781.6,599.6 779.6,596.4 779.6,592.6 C779.6,586.4 785,581.6 792,581.6 Z" fill="#fdfdf6"/>
<circle cx="789.3" cy="586.2" r="1.5" fill="#fff" stroke="#a0a0a0" stroke-width="0.6"/><circle cx="801.5" cy="586.2" r="1.5" fill="#fff" stroke="#a0a0a0" stroke-width="0.6"/>
<path d="M810.4,590 C817.4,590 823.6,594.8 823.6,601.6 C823.6,605.2 821.8,608.2 819,610.4 L819.8,615.4 L815.4,612.6 C813.8,613.1 812.2,613.4 810.4,613.4 C803.2,613.4 797.2,608.4 797.2,601.6 C797.2,594.8 803.2,590 810.4,590 Z" fill="#808080" transform="translate(-1 1)"/>
<path d="M810.4,590 C817.4,590 823.6,594.8 823.6,601.6 C823.6,605.2 821.8,608.2 819,610.4 L819.8,615.4 L815.4,612.6 C813.8,613.1 812.2,613.4 810.4,613.4 C803.2,613.4 797.2,608.4 797.2,601.6 C797.2,594.8 803.2,590 810.4,590 Z" fill="#fefef8"/>
<circle cx="805" cy="597.3" r="1.5" fill="#fff" stroke="#a0a0a0" stroke-width="0.6"/><circle cx="814.4" cy="597.3" r="1.5" fill="#fff" stroke="#a0a0a0" stroke-width="0.6"/>
</g>
</svg>
<div class="abs" style="left:921px;top:601px;font-size:5.4px;line-height:8.6px;color:#cfd4c6;white-space:nowrap;font-family:'Liberation Sans','Noto Sans CJK SC',sans-serif">上海镱镭光电科技<br>超快激光解决方案<br>飞秒光纤激光器<br>服务 · 创新</div>

<div id="wm">上海镱镭飞秒激光</div>

</div>
</body>
</html>
